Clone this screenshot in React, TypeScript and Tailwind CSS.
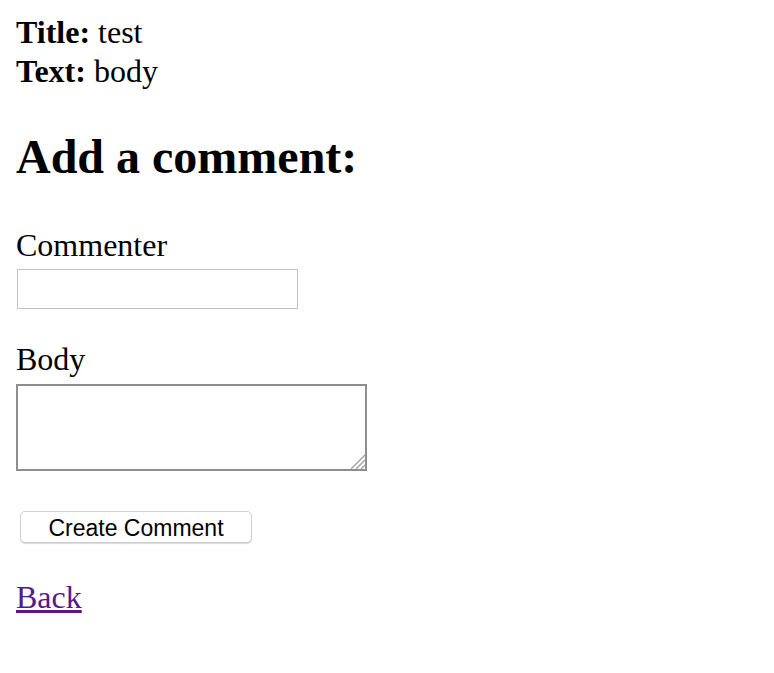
export default function App() {
  return (
    <div className="min-h-screen bg-white px-4 text-black" style={{ fontFamily: '"Liberation Serif", "Times New Roman", serif' }}>
      <div className="pt-[13px] text-[32px] leading-[39px]">
        <p>
          <strong>Title:</strong> test
        </p>
        <p>
          <strong>Text:</strong> body
        </p>
      </div>

      <h2 className="mt-[38px] text-[48px] font-bold leading-[56px]">Add a comment:</h2>

      <form className="flex flex-col items-start" onSubmit={(e) => e.preventDefault()}>
        <label className="mt-[41px] text-[32px] leading-[39px]">Commenter</label>
        <input
          type="text"
          className="ml-px mt-1 h-10 w-[281px] border border-[#c2c2c2] bg-white outline-none"
        />

        <label className="mt-[31px] text-[32px] leading-[39px]">Body</label>
        <div className="relative mt-[5px]">
          <textarea className="block h-[87px] w-[351px] resize-none border-2 border-[#8e8e8e] bg-white outline-none" />
          <svg className="pointer-events-none absolute bottom-[2px] right-[2px]" width="16" height="16" viewBox="0 0 16 16">
            <path d="M16 2 L2 16 M16 7 L7 16 M16 12 L12 16" stroke="#a0a0a0" strokeWidth="1.4" />
          </svg>
        </div>

        <button
          type="submit"
          className="ml-1 mt-10 h-8 w-[232px] rounded-[5px] border border-[#cfcfcf] bg-white pt-[3px] text-[23px] leading-none text-black shadow-[0_1px_1px_rgba(0,0,0,0.15)]"
          style={{ fontFamily: '"Liberation Sans", Arial, sans-serif' }}
        >
          Create Comment
        </button>
      </form>

      <a href="#" className="mt-[35px] block w-fit text-[32px] leading-[39px] text-[#551a8b] underline">
        Back
      </a>
    </div>
  );
}
